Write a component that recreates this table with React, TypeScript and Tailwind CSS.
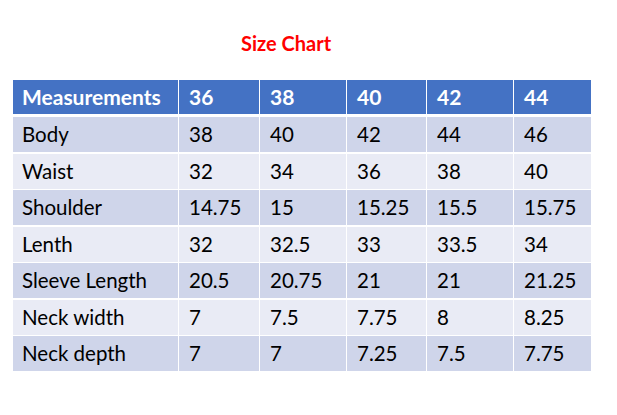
import React from 'react';

type Row = {
  label: string;
  values: string[];
};

const sizes: string[] = ['36', '38', '40', '42', '44'];

const rows: Row[] = [
  { label: 'Body', values: ['38', '40', '42', '44', '46'] },
  { label: 'Waist', values: ['32', '34', '36', '38', '40'] },
  { label: 'Shoulder', values: ['14.75', '15', '15.25', '15.5', '15.75'] },
  { label: 'Lenth', values: ['32', '32.5', '33', '33.5', '34'] },
  { label: 'Sleeve Length', values: ['20.5', '20.75', '21', '21', '21.25'] },
  { label: 'Neck width', values: ['7', '7.5', '7.75', '8', '8.25'] },
  { label: 'Neck depth', values: ['7', '7', '7.25', '7.5', '7.75'] },
];

function App() {
  return (
    <div className="w-[617px] h-[415px] bg-white font-['Lato','Noto_Sans',sans-serif] overflow-hidden">
      {/* title */}
      <div className="pt-[31px] pl-[241px] h-[80px]">
        <h1 className="text-[20px] leading-[24px] font-bold text-[#ff0000]">Size Chart</h1>
      </div>

      {/* size table */}
      <div className="ml-[13px] w-[578px]">
        <div className="grid grid-cols-[165px_80px_86px_79px_86px_77px] gap-x-px h-[34px] mb-[3px]">
          <div className="bg-[#4472c4] text-white font-bold text-[21px] flex items-center pl-[9px]">
            Measurements
          </div>
          {sizes.map((s) => (
            <div key={s} className="bg-[#4472c4] text-white font-bold text-[21px] flex items-center pl-[10px]">
              {s}
            </div>
          ))}
        </div>

        <div className="flex flex-col gap-y-[1.5px]">
          {rows.map((row, i) => (
            <div
              key={row.label}
              className="grid grid-cols-[165px_80px_86px_79px_86px_77px] gap-x-px h-[35px]"
            >
              <div
                className={`${i % 2 === 0 ? 'bg-[#cfd5ea]' : 'bg-[#e9ebf5]'} text-black text-[20.5px] flex items-center pl-[9px]`}
              >
                {row.label}
              </div>
              {row.values.map((v, j) => (
                <div
                  key={j}
                  className={`${i % 2 === 0 ? 'bg-[#cfd5ea]' : 'bg-[#e9ebf5]'} text-black text-[20.5px] flex items-center pl-[10px]`}
                >
                  {v}
                </div>
              ))}
            </div>
          ))}
        </div>
      </div>
    </div>
  );
}

export default App;
